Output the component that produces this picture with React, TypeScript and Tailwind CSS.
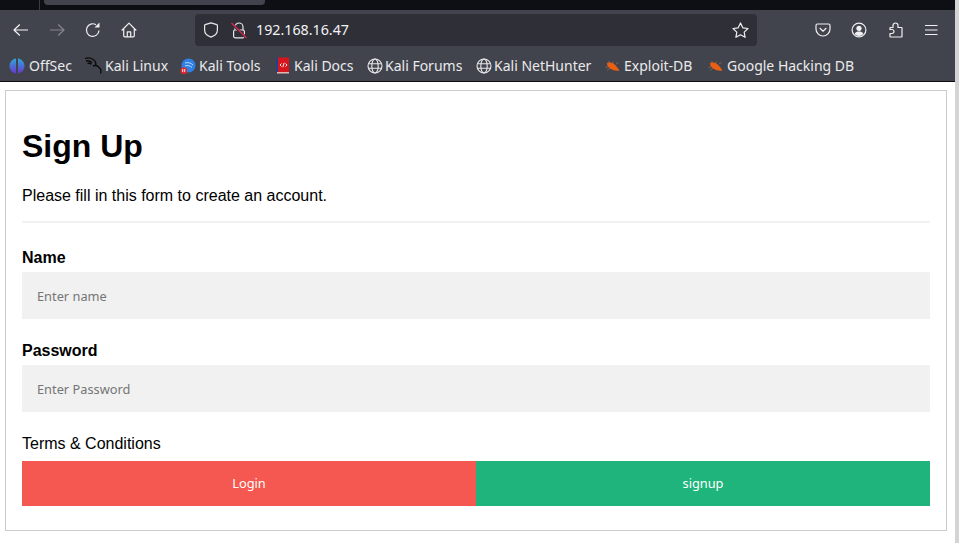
import React from 'react';

const Globe = () => (
  <svg width="16" height="16" viewBox="0 0 16 16" fill="none" stroke="#e8e8ea" strokeWidth="1.1">
    <circle cx="8" cy="8" r="7" />
    <ellipse cx="8" cy="8" rx="3.2" ry="7" />
    <path d="M1 5.7h14M1 10.3h14" />
  </svg>
);

const Bug = () => (
  <svg width="16" height="16" viewBox="0 0 16 16" fill="none">
    <path d="M1.500 9.500l3-1M3 12.500l3-2.500M4.500 3l2 2.500M9 3.500L8.500 6M12 6l2.500-1.500" stroke="#8f6a55" strokeWidth="0.8" />
    <path d="M3 5c4-1.200 7 .5 9.500 3.500 1.200 1.500 2.500 3 3 4-3 .5-6.500 0-9-1.700C4.300 9.300 2.800 7.400 3 5z" fill="#ea5f12" />
  </svg>
);

const OffSecIcon = () => (
  <svg width="16" height="16" viewBox="0 0 16 16">
    <defs>
      <linearGradient id="off" x1="0" y1="0" x2="0" y2="1">
        <stop offset="0" stopColor="#2ea8d8" />
        <stop offset="1" stopColor="#6a35d0" />
      </linearGradient>
    </defs>
    <path d="M7 .5v15C3 15 .5 11.500.5 8S3 1 7 .5z" fill="url(#off)" />
    <path d="M9 .5v15c4-.5 6.500-4 6.500-7.500S13 1 9 .5z" fill="url(#off)" />
  </svg>
);

const KaliIcon = () => (
  <svg width="17" height="17" viewBox="0 0 17 17" fill="none" stroke="#0b0b0b" strokeWidth="1.400">
    <path d="M0 1.500c3-1 6-.5 8 1 2.500 1.500 3.500 3 2.500 5.500-.3 1-1.200 1-2.500.5M1 4c2-.5 4 0 6 1.500M2.500 6.500c1.500-.5 3 0 4 .5M10.500 8c2 1 4 2 5 4 .6 1.500.5 3 0 4.500" />
  </svg>
);

const ToolsIcon = () => (
  <svg width="16" height="16" viewBox="0 0 16 16" fill="none">
    <circle cx="8.500" cy="7.500" r="7" fill="#2f80e4" />
    <path d="M5 5c3-1 6 0 8 2M5 8c2-1 5-.5 7 1.500" stroke="#cfe4fb" strokeWidth="0.9" />
    <rect x="0.500" y="9.500" width="6.500" height="6.500" rx="2.500" fill="#e0242b" />
    <path d="M2.700 11v3M4.700 11v3" stroke="#fff" strokeWidth="0.9" />
  </svg>
);

const DocsIcon = () => (
  <svg width="14" height="17" viewBox="0 0 14 17">
    <rect x="0" y="0.500" width="13" height="15" fill="#d5161c" />
    <rect x="0" y="0.500" width="2" height="15" fill="#23408e" />
    <rect x="1" y="15" width="12" height="1.500" fill="#e6b3b3" />
    <path d="M5.500 6.500L4 8l1.500 1.500M9.500 6.500L11 8 9.500 9.500M8.200 5.800L6.800 10.200" stroke="#fff" strokeWidth="0.9" fill="none" />
  </svg>
);

const ToolIcon = ({ children, color = '#f0f0f2' }: { children: React.ReactNode; color?: string }) => (
  <svg width="16" height="16" viewBox="0 0 16 16" fill="none" stroke={color} strokeWidth="1.200" strokeLinejoin="round" className="shrink-0">
    {children}
  </svg>
);

const bookmarks = [
  { label: 'OffSec', icon: <OffSecIcon />, item: 'w-[76px]', slot: 'w-[20px]' },
  { label: 'Kali Linux', icon: <KaliIcon />, item: 'w-[95px]', slot: 'w-[20px]' },
  { label: 'Kali Tools', icon: <ToolsIcon />, item: 'w-[96px]', slot: 'w-[19px]' },
  { label: 'Kali Docs', icon: <DocsIcon />, item: 'w-[91px]', slot: 'w-[18px]' },
  { label: 'Kali Forums', icon: <Globe />, item: 'w-[109px]', slot: 'w-[18px]' },
  { label: 'Kali NetHunter', icon: <Globe />, item: 'w-[128px]', slot: 'w-[18px]' },
  { label: 'Exploit-DB', icon: <Bug />, item: 'w-[103px]', slot: 'w-[20px]' },
  { label: 'Google Hacking DB', icon: <Bug />, item: 'w-[150px]', slot: 'w-[20px]' },
];

const App = () => {
  return (
    <div className="w-[959px] h-[543px] overflow-hidden bg-white flex font-['Liberation_Sans',sans-serif]">
      <div className="w-[955px] shrink-0">
        <div className="bg-[#42444d] border-b border-[#0c0c0f]">
          <div className="h-2.5 bg-[#0e0f14] flex items-start pl-[39px]">
            <div className="w-px h-2.5 bg-[#3b3c42]" />
            <div className="ml-1 w-[221px] h-[5px] bg-[#42444d] rounded-b" />
          </div>

          <div className="h-[40px] flex items-center pl-[13px] font-['Noto_Sans',sans-serif]">
            <div className="w-[182px] flex items-center gap-[20px]">
              <ToolIcon color="#f4f4f6"><path d="M1 8h14M6.800 2.500L1 8l5.800 5.500" /></ToolIcon>
              <ToolIcon color="#85868c"><path d="M1 8h14M9.200 2.500L15 8l-5.800 5.500" /></ToolIcon>
              <ToolIcon>
                <path d="M14 8.500A6.300 6.300 0 1 1 11 2.700" />
                <path d="M14.500 .5v5H9.500z" fill="#f0f0f2" stroke="none" />
              </ToolIcon>
              <ToolIcon>
                <path d="M.7 8.500L8 1.200l7.300 7.300M2.700 6.800v7a1 1 0 0 0 1 1h8.600a1 1 0 0 0 1-1v-7M6.300 14.800V9.800h3.400v5" />
              </ToolIcon>
            </div>
            <div className="w-[562px] h-8 rounded bg-[#2f3037] flex items-center pl-[8px] pr-2">
              <ToolIcon color="#e8e8ea">
                <path d="M8 .9L2.200 2.600a.8.8 0 0 0-.6.8V8c0 3.500 2.800 5.900 6.400 7.100 3.600-1.200 6.400-3.600 6.400-7.100V3.400a.8.8 0 0 0-.6-.8z" />
              </ToolIcon>
              <span className="ml-[12px] flex">
                <svg width="16" height="17" viewBox="0 0 16 17" fill="none" stroke="#e8e8ea" strokeWidth="1.200">
                  <path d="M4 8V5a4 4 0 0 1 8 0v3" />
                  <rect x="2.600" y="8" width="10.800" height="7.800" rx="1.500" />
                  <path d="M.5 1.500l15 14.500" stroke="#2f3037" strokeWidth="2.600" />
                  <path d="M.5 1l15 15" stroke="#e22850" strokeWidth="1.300" />
                </svg>
              </span>
              <span className="ml-[9px] text-[14.25px] text-[#f2f2f4]">192.168.16.47</span>
              <span className="ml-auto flex">
                <svg width="17" height="17" viewBox="0 0 17 17" fill="none" stroke="#f0f0f2" strokeWidth="1.200" strokeLinejoin="round">
                  <path d="M8.500 1l2.300 4.800 5.200.7-3.800 3.600.9 5.200-4.600-2.500-4.600 2.500.9-5.200L1 6.500l5.200-.7z" />
                </svg>
              </span>
            </div>
            <div className="ml-[58px] flex items-center">
              <ToolIcon>
                <path d="M2.400 2h11.200A1.400 1.400 0 0 1 15 3.400V7A7 7 0 0 1 1 7V3.400A1.400 1.400 0 0 1 2.400 2z" />
                <path d="M5 6.300L8 9.200l3-2.900" strokeLinecap="round" />
              </ToolIcon>
              <span className="ml-[20px] flex">
                <ToolIcon>
                  <circle cx="8" cy="8" r="6.900" />
                  <circle cx="8" cy="6.300" r="2.600" fill="#f0f0f2" stroke="none" />
                  <path d="M3.500 12c1-1.800 2.500-2.400 4.500-2.400s3.500.6 4.500 2.400A6 6 0 0 1 8 14a6 6 0 0 1-4.500-2z" fill="#f0f0f2" stroke="none" />
                </ToolIcon>
              </span>
              <span className="ml-[21px] flex">
                <ToolIcon>
                  <path d="M5 5.500V3.500a2.500 2.500 0 0 1 5 0v2h3.500a.5.5 0 0 1 .5.500v8.500a.5.5 0 0 1-.5.500H2.500a.5.5 0 0 1-.5-.5v-3h2a2 2 0 0 0 0-4H2V6a.5.5 0 0 1 .5-.5z" />
                </ToolIcon>
              </span>
              <span className="ml-[19px] flex">
                <ToolIcon>
                  <path d="M2 3.500h12.500M2 8h12.500M2 12.500h12.500" />
                </ToolIcon>
              </span>
            </div>
          </div>

          <div className="h-[31px] flex items-center pl-[9px] text-[14px] text-[#eaeaec] font-['Noto_Sans',sans-serif]">
            {bookmarks.map(b => (
              <div key={b.label} className={`flex items-center whitespace-nowrap shrink-0 ${b.item}`}>
                <span className={`flex shrink-0 ${b.slot}`}>{b.icon}</span>
                <span>{b.label}</span>
              </div>
            ))}
          </div>
        </div>

        <div className="ml-[5px] mt-2 w-[942px] h-[441px] border border-[#ccc] px-4 pt-4">
          <h1 className="mt-[21px] text-[32px] leading-[37px] font-bold text-black">Sign Up</h1>
          <p className="mt-[22px] text-base leading-[18px] text-black">Please fill in this form to create an account.</p>
          <hr className="mt-[16px] border-0 h-0.5 bg-[#f1f1f1]" />

          <label className="block mt-[26px] text-base leading-[18px] font-bold text-black">Name</label>
          <input
            placeholder="Enter name"
            className="block mt-[5px] w-full h-[47px] bg-[#f1f1f1] px-[15px] text-[12.8px] font-['Noto_Sans',sans-serif] placeholder:text-[#757575] outline-none"
          />

          <label className="block mt-[23px] text-base leading-[18px] font-bold text-black">Password</label>
          <input
            placeholder="Enter Password"
            className="block mt-[5px] w-full h-[47px] bg-[#f1f1f1] px-[15px] text-[12.8px] font-['Noto_Sans',sans-serif] placeholder:text-[#757575] outline-none"
          />

          <p className="mt-[23px] text-base leading-[18px] text-black">Terms &amp; Conditions</p>

          <div className="mt-2 flex h-[45px]">
            <button className="w-1/2 bg-[#f55850] text-white text-[12.8px] font-['Noto_Sans',sans-serif]">Login</button>
            <button className="w-1/2 bg-[#1eb47b] text-white text-[12.8px] font-['Noto_Sans',sans-serif]">signup</button>
          </div>
        </div>
      </div>
      <div className="w-1 bg-[#d4d4d4]" />
    </div>
  );
};

export default App;
